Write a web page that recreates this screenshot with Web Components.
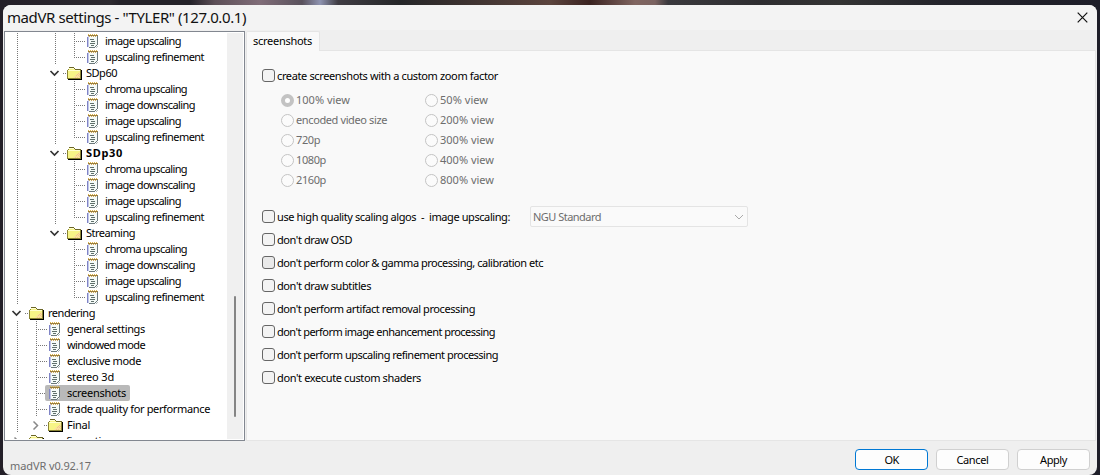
<!DOCTYPE html>
<html lang="en"><head><meta charset="utf-8"><title>madVR settings</title>
<style>html,body{margin:0;height:475px;overflow:hidden;font-family:"Noto Sans",sans-serif;font-size:11px;color:#000}</style></head>
<body>
<settings-window></settings-window>
<script>
const define = (name, cls) => customElements.define(name, cls);

/* Single-line label whose tracking is tuned to a known width in pixels. */
define('fit-text', class extends HTMLElement {
  connectedCallback() {
    const r = this.attachShadow({mode:'open'});
    r.innerHTML = `<style>:host{display:inline-block;white-space:pre;flex:none}</style><span><slot></slot></span>`;
    const w = +this.getAttribute('w'), n = this.textContent.length;
    const s = r.querySelector('span');
    const now = s.getBoundingClientRect().width;
    if (w && now) s.style.letterSpacing = ((w - now) / n) + 'px';
  }
});

define('folder-icon', class extends HTMLElement {
  connectedCallback() {
    this.attachShadow({mode:'open'}).innerHTML = `<style>:host{display:block;width:16px;height:16px}svg{display:block}</style>
    <svg width="16" height="16" shape-rendering="crispEdges">
      <path d="M0 5h1V4h1V3h5v1h1v1h6v9H0z" fill="#8a8433"/>
      <path d="M2 2h5v1H2zM7 3h1v1H7zM8 4h6v1H8z" fill="#6b6628"/>
      <path d="M14 5h1v10H1v-1h13z" fill="#000"/>
      <path d="M2 3h5v1h1v1h5v8H1V5h1z" fill="#f7f486"/>
      <path d="M2 3h5v1H2zM1 5h12v1H1z" fill="#fffed0"/>
      <path d="M13 7v6H6v-1h1v-1h1v-1h1V9h2V8h1V7z" fill="#f8e39a"/>
      <path d="M11 8h1v1h-1zM9 10h1v1H9zM11 10h1v1h-1zM8 12h1v1H8zM10 12h1v1h-1zM12 9h1v1h-1zM10 9h1v1h-1zM12 11h1v1h-1z" fill="#f5c58d"/>
    </svg>`;
  }
});

define('note-icon', class extends HTMLElement {
  connectedCallback() {
    this.attachShadow({mode:'open'}).innerHTML = `<style>:host{display:block;width:12px;height:16px}svg{display:block}</style>
    <svg width="12" height="16" shape-rendering="crispEdges">
      <path d="M0 4h1v10H0z" fill="#7f84c6"/>
      <path d="M1 3h9v11H1z" fill="#f5fbf8"/>
      <path d="M1 3h1v11H1z" fill="#c2c6e8"/>
      <path d="M10 3h1v9h-1v1H9v1H8v1H2v-1h6v-1h1v-1h1z" fill="#6b787c"/>
      <path d="M9 14h1v-1h1v1h-1v1H9z" fill="#b4bcbd"/>
      <path d="M1 2h10v1H1z" fill="#9b7f3c"/>
      <path d="M1 1h1v1H1zM3 1h1v1H3zM5 1h1v1H5zM7 1h1v1H7zM9 1h1v1H9z" fill="#e0b84e"/>
      <path d="M2 3h1v1H2zM4 3h1v1H4zM6 3h1v1H6zM8 3h1v1H8z" fill="#d3a95a"/>
      <path d="M3 6h4v1H3zM4 8h4v1H4zM3 10h5v1H3zM4 12h3v1H4z" fill="#60706c"/>
    </svg>`;
  }
});

/* One tree line: dotted guides, optional chevron, icon and label. */
define('tree-row', class extends HTMLElement {
  connectedCallback() {
    const level = +this.getAttribute('level'), folder = this.hasAttribute('folder');
    const last = this.hasAttribute('last'), state = this.getAttribute('folder');
    const guides = (this.getAttribute('guides') || '').split(' ').filter(Boolean).map(Number);
    const X = l => 12 + l * 19;
    const w = level * 19 + 24 + (folder ? 0 : 1);
    let p = guides.map(l => `M${X(l)}.5 0V${l === level && last ? 9 : 16}`).join('');
    if (folder) p += `M${X(level)+8} 8.5h4`;
    else p += `M${X(level)} 8.5h11`;
    let chev = '';
    if (folder) {
      const c = X(level) - .5;
      chev = state === 'open'
        ? `<rect x="${c-4.5}" y="0" width="11" height="16" fill="#fff"/><path d="M${c-4} 6l4 4 4-4" fill="none" stroke="#333" stroke-width="1.7"/>`
        : `<rect x="${c-4.5}" y="0" width="11" height="16" fill="#fff"/><path d="M${c-2} 4.5l4 4-4 4" fill="none" stroke="#888" stroke-width="1.5"/>`;
    }
    this.attachShadow({mode:'open'}).innerHTML = `<style>
      :host{display:flex;height:16px;line-height:16px;flex:none}
      svg{flex:none;display:block}
      .item{display:flex;position:relative}
      .label{margin-left:${folder ? 3 : 6}px;font-weight:${this.hasAttribute('bold') ? 700 : 400}}
      :host([selected]) .item{background:#b9b9b9;border-radius:2px;margin-left:-4px;padding:0 4px 0 4px}
    </style>
    <svg width="${w}" height="16"><path d="${p}" fill="none" stroke="#777" stroke-dasharray="1 1"/>${chev}</svg>
    <div class="item">${folder ? '<folder-icon></folder-icon>' : '<note-icon></note-icon>'}<div class="label"><slot></slot></div></div>`;
  }
});

define('settings-tree', class extends HTMLElement {
  connectedCallback() {
    const row = (level, text, w, guides, extra='') =>
      `<tree-row level="${level}" guides="${guides}" ${extra}><fit-text w="${w}">${text}</fit-text></tree-row>`;
    const kids = (g, all=true) =>
      (all ? row(3,'chroma upscaling',82,g+' 3') + row(3,'image downscaling',90,g+' 3') : '') +
      row(3,'image upscaling',76,g+' 3') + row(3,'upscaling refinement',99,g+' 3','last');
    this.attachShadow({mode:'open'}).innerHTML = `<style>
      :host{display:flex;box-sizing:border-box;width:241px;height:410px;border:1px solid #828790;background:#fff;overflow:hidden}
      .rows{flex:1;min-width:0;display:flex;flex-direction:column;padding-top:1px;overflow:hidden;height:406px}
      .bar{width:16px;margin:1px 1px 1px 0;background:#f0f0f0;flex:none}
      .thumb{width:2px;height:121px;margin:263px 0 0 7px;background:#858585;border-radius:1px}
    </style>
    <div class="rows">${kids('0 2', false)}
      ${row(2,'SDp60',31,'0 2','folder="open"')}${kids('0 2')}
      ${row(2,'SDp30',37,'0 2','folder="open" bold')}${kids('0 2')}
      ${row(2,'Streaming',49,'0 2','folder="open"')}${kids('0')}
      ${row(0,'rendering',47,'0','folder="open"')}
      ${row(1,'general settings',78,'0 1')}${row(1,'windowed mode',78,'0 1')}${row(1,'exclusive mode',74,'0 1')}
      ${row(1,'stereo 3d',47,'0 1')}${row(1,'screenshots',59,'0 1','selected')}
      ${row(1,'trade quality for performance',143,'0 1')}
      ${row(1,'Final',23,'0 1','folder="closed"')}${row(0,'configuration',66,'0','folder="closed"')}
    </div><div class="bar"><div class="thumb"></div></div>`;
  }
});

define('check-option', class extends HTMLElement {
  connectedCallback() {
    this.attachShadow({mode:'open'}).innerHTML = `<style>
      :host{display:flex;align-items:center;height:23px;line-height:16px}
      i{box-sizing:border-box;width:13px;height:13px;border:1px solid #666;border-radius:3px;background:#f3f3f3;margin-right:2px;flex:none}
      :host([hot]) i{background:#e9e9e9}
    </style><i></i><slot></slot>`;
  }
});

define('radio-option', class extends HTMLElement {
  connectedCallback() {
    this.attachShadow({mode:'open'}).innerHTML = `<style>
      :host{display:flex;align-items:center;height:20px;line-height:16px;color:#6d6d6d}
      i{box-sizing:border-box;width:13px;height:13px;border:1px solid #c4c4c4;border-radius:50%;background:#fbfbfb;margin-right:2px;flex:none}
      :host([checked]) i{border:4px solid #c3c3c3;background:#fff}
    </style><i></i><slot></slot>`;
  }
});

define('drop-down', class extends HTMLElement {
  connectedCallback() {
    this.attachShadow({mode:'open'}).innerHTML = `<style>
      :host{display:flex;box-sizing:border-box;align-items:center;justify-content:space-between;width:218px;height:21px;border:1px solid #e4e4e4;border-radius:2px;background:#fafafa;color:#6d6d6d;padding:0 3px 0 2px;line-height:16px}
    </style><slot></slot><svg width="10" height="6"><path d="M1 1l4 4 4-4" fill="none" stroke="#aaa"/></svg>`;
  }
});

define('push-button', class extends HTMLElement {
  connectedCallback() {
    this.attachShadow({mode:'open'}).innerHTML = `<style>
      :host{display:flex;box-sizing:border-box;align-items:center;justify-content:center;width:73px;height:21px;border:1px solid #d0d0d0;border-radius:4px;background:#fdfdfd;line-height:16px}
      :host([primary]){border-color:#0078d4}
    </style><slot></slot>`;
  }
});

define('tab-page', class extends HTMLElement {
  connectedCallback() {
    const radio = (t, w, c='') => `<radio-option ${c}><fit-text w="${w}">${t}</fit-text></radio-option>`;
    const check = (t, w, c='') => `<check-option ${c}><fit-text w="${w}">${t}</fit-text></check-option>`;
    this.attachShadow({mode:'open'}).innerHTML = `<style>
      :host{display:flex;flex-direction:column;width:850px;height:410px}
      .tab{box-sizing:border-box;width:74px;height:20px;margin-bottom:-1px;z-index:1;border:1px solid #e5e5e5;border-bottom:0;background:#f9f9f9;padding-left:6px;line-height:18px;border-radius:2px 2px 0 0}
      .body{box-sizing:border-box;flex:1;border:1px solid #e5e5e5;background:#f9f9f9;padding:13px 0 0 15px}
      .radios{display:grid;grid-template-columns:144px 144px;padding:3px 0 0 19px}
      .line{display:flex;align-items:center;margin-top:15px;height:23px}
      drop-down{margin-left:20px}
    </style>
    <div class="tab"><fit-text w="59">screenshots</fit-text></div>
    <div class="body">
      ${check('create screenshots with a custom zoom factor',221)}
      <div class="radios">
        ${radio('100% view',54,'checked')}${radio('50% view',48)}
        ${radio('encoded video size',91)}${radio('200% view',54)}
        ${radio('720p',24)}${radio('300% view',54)}
        ${radio('1080p',30)}${radio('400% view',54)}
        ${radio('2160p',30)}${radio('800% view',54)}
      </div>
      <div class="line">${check('use high quality scaling algos  -  image upscaling:',233)}<drop-down><fit-text w="68">NGU Standard</fit-text></drop-down></div>
      ${check("don't draw OSD",75)}
      ${check("don't perform color &amp; gamma processing, calibration etc",266,'hot')}
      ${check("don't draw subtitles",94)}
      ${check("don't perform artifact removal processing",198)}
      ${check("don't perform image enhancement processing",218)}
      ${check("don't perform upscaling refinement processing",221)}
      ${check("don't execute custom shaders",144)}
    </div>`;
  }
});

define('title-bar', class extends HTMLElement {
  connectedCallback() {
    this.attachShadow({mode:'open'}).innerHTML = `<style>
      :host{display:flex;justify-content:space-between;align-items:center;height:25px;background:#f3f3f3;padding:0 9px 0 3px;font-size:15px;line-height:20px;color:#111}
      fit-text{margin-top:-2px}svg{margin-top:-1px}
    </style><fit-text w="239">madVR settings - "TYLER" (127.0.0.1)</fit-text>
    <svg width="11" height="11"><path d="M.7.7l9.6 9.6M10.3.7L.7 10.3" stroke="#111" stroke-width="1.2"/></svg>`;
  }
});

define('settings-window', class extends HTMLElement {
  connectedCallback() {
    this.attachShadow({mode:'open'}).innerHTML = `<style>
      :host{display:block;box-sizing:border-box;width:1100px;height:475px;padding:5px 3px 0 3px;
        background:linear-gradient(90deg,#231f28 0,#2d2a30 110px,#242229 120px,#242229 190px,#5d5058 215px,#806d78 260px,#5a525d 302px,#8e93b0 320px,#3f3c43 338px,#252628 400px,#3a302f 460px,#5b443d 550px,#3a2220 590px,#806560 635px,#7a6260 655px,#3a393d 668px,#2e2d30 760px,#333 840px,#24242b 940px,#1d1d28 1100px)}
      .win{box-sizing:border-box;width:1094px;height:470px;background:#efefef;border-radius:8px;overflow:hidden;padding:0 1px}
      title-bar{margin:0 -1px}
      title-bar{padding-left:4px}
      .main{display:flex;gap:1px;padding-top:1px}
      .foot{display:flex;gap:8px;padding:8px 6px 0 6px}
      .ver{flex:1;color:#6d6d6d;line-height:16px;padding-top:9px}
    </style>
    <div class="win"><title-bar></title-bar>
      <div class="main"><settings-tree></settings-tree><tab-page></tab-page></div>
      <div class="foot"><div class="ver"><fit-text w="81">madVR v0.92.17</fit-text></div>
        <push-button primary><fit-text w="14">OK</fit-text></push-button>
        <push-button><fit-text w="32">Cancel</fit-text></push-button>
        <push-button><fit-text w="27">Apply</fit-text></push-button></div>
    </div>`;
  }
});
</script>
</body></html>
